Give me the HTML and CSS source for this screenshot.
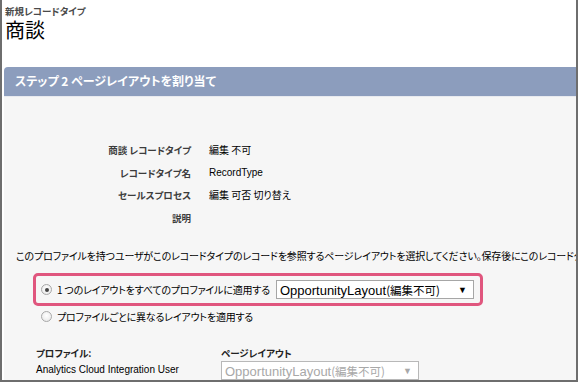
FILE: index.html
```html
<!DOCTYPE html>
<html lang="ja">
<head>
<meta charset="utf-8">
<link rel="stylesheet" href="styles.css">
</head>
<body>
<div class="frame">
  <div class="page-head">
    <div class="crumb">新規レコードタイプ</div>
    <h1 class="title">商談</h1>
  </div>
  <div class="panel">
    <div class="panel-head">ステップ 2 ページレイアウトを割り当て</div>
    <div class="panel-body">
      <div class="details">
        <div class="lbl">商談 レコードタイプ</div><div class="val">編集 不可</div>
        <div class="lbl">レコードタイプ名</div><div class="val latin">RecordType</div>
        <div class="lbl">セールスプロセス</div><div class="val">編集 可否 切り替え</div>
        <div class="lbl">説明</div><div class="val"></div>
      </div>
      <p class="intro">このプロファイルを持つユーザがこのレコードタイプのレコードを参照するページレイアウトを選択してください。保存後にこのレコードタイプ</p>
      <div class="highlight">
        <div class="opt">
          <span class="radio checked"></span>
          <span class="opt-text">1 つのレイアウトをすべてのプロファイルに適用する</span>
          <div class="select"><span class="sel-text">OpportunityLayout<span class="cjk">(編集不可)</span></span><span class="arrow">▼</span></div>
        </div>
      </div>
      <div class="opt opt2">
        <span class="radio"></span>
        <span class="opt-text">プロファイルごとに異なるレイアウトを適用する</span>
      </div>
      <div class="profiles">
        <div class="col-a">
          <div class="th">プロファイル:</div>
          <div class="td latin">Analytics Cloud Integration User</div>
        </div>
        <div class="col-b">
          <div class="th">ページレイアウト</div>
          <div class="select disabled"><span class="sel-text">OpportunityLayout<span class="cjk">(編集不可)</span></span><span class="arrow">▼</span></div>
        </div>
      </div>
    </div>
  </div>
</div>
</body>
</html>
```
FILE: styles.css
```css
html, body {
  margin: 0;
  padding: 0;
  background: #ffffff;
}
body {
  font-family: "Noto Sans CJK JP", "Liberation Sans", sans-serif;
  font-feature-settings: "palt";
  color: #000;
}
.frame {
  width: 578px;
  height: 382px;
  box-sizing: border-box;
  border-left: 2px solid #6e6e6e;
  border-right: 2px solid #6e6e6e;
  border-bottom: 2px solid #6e6e6e;
  overflow: hidden;
  background: #fff;
}
.page-head {
  padding: 5px 0 0 3px;
  height: 60px;
  box-sizing: border-box;
}
.crumb {
  font-size: 9.5px;
  font-weight: bold;
  color: #4a4a4a;
  line-height: 12px;
}
.title {
  margin: 2px 0 0 0;
  font-size: 20px;
  font-weight: normal;
  line-height: 21px;
}
.panel {
  margin-top: 7px;
  margin-left: 2px;
}
.panel-head {
  height: 29px;
  line-height: 28px;
  background: #8c9dbd;
  border-radius: 4px 0 0 0;
  color: #fff;
  font-weight: bold;
  font-size: 12px;
  padding-left: 11px;
  border-bottom: 1px solid #e8eaef;
}
.panel-body {
  background: #f6f6f6;
  height: 300px;
  padding-top: 42px;
  box-sizing: border-box;
  font-size: 10px;
}
.details {
  display: grid;
  grid-template-columns: 187px 1fr;
  column-gap: 18px;
  grid-auto-rows: 22.5px;
}
.lbl {
  text-align: right;
  font-weight: bold;
  color: #3c3c3c;
  font-size: 9.5px;
  line-height: 22.5px;
}
.val {
  font-size: 10px;
  line-height: 22.5px;
  color: #000;
}
.latin {
  font-family: "Liberation Sans", sans-serif;
}
.intro {
  margin: 20px 0 0 12px;
  white-space: nowrap;
  font-size: 10px;
  line-height: 14px;
  letter-spacing: -0.15px;
}
.highlight {
  margin: 10px 0 0 29px;
  width: 444px;
  height: 27px;
  border: 3px solid #e0567e;
  border-radius: 5px;
  box-sizing: content-box;
  display: flex;
  align-items: center;
  background: #f6f6f6;
}
.opt {
  display: flex;
  align-items: center;
}
.highlight .opt {
  padding-left: 5px;
}
.opt2 {
  margin: 3px 0 0 37px;
}
.radio {
  width: 11px;
  height: 11px;
  border-radius: 50%;
  border: 1px solid #a8a8a8;
  background: radial-gradient(circle at 50% 40%, #ffffff 0%, #e4e4e4 100%);
  box-sizing: border-box;
  position: relative;
  flex: none;
}
.radio.checked::after {
  content: "";
  position: absolute;
  left: 2.5px;
  top: 2.5px;
  width: 4px;
  height: 4px;
  border-radius: 50%;
  background: #444;
}
.opt-text {
  margin-left: 5px;
  font-size: 10px;
  letter-spacing: -0.2px;
}
.select {
  margin-left: 6px;
  width: 198px;
  height: 19px;
  box-sizing: border-box;
  border: 1px solid #a6a6a6;
  background: #fff;
  display: flex;
  align-items: center;
  justify-content: space-between;
  padding: 0 6px 0 3px;
  font-family: "Liberation Sans", sans-serif;
  font-size: 13px;
  color: #000;
  font-feature-settings: normal;
}
.cjk {
  font-family: "Noto Sans CJK JP", sans-serif;
  font-size: 11.5px;
  font-feature-settings: normal;
}
.arrow {
  font-size: 9px;
}
.profiles {
  display: flex;
  margin: 22px 0 0 32px;
}
.col-a {
  width: 185px;
}
.th {
  font-weight: bold;
  font-size: 9.5px;
  line-height: 14px;
  color: #222;
}
.td {
  font-size: 10px;
  line-height: 18px;
  margin-top: 1px;
}
.col-b .select {
  margin: 1px 0 0 0;
}
.select.disabled {
  color: #a8a8a8;
  border-color: #b8b8b8;
}
```
